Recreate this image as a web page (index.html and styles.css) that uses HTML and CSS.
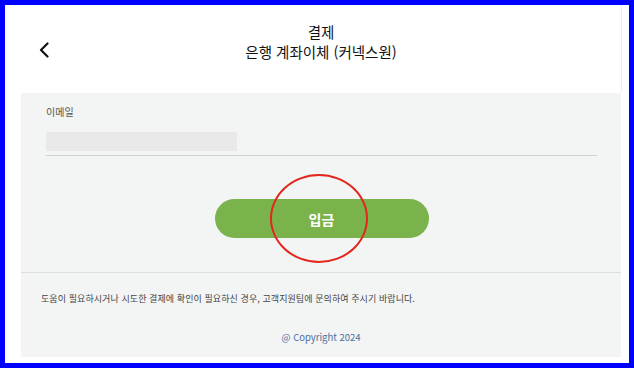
FILE: index.html
```html
<!DOCTYPE html>
<html lang="ko">
<head>
<meta charset="utf-8">
<title>결제</title>
<link rel="stylesheet" href="styles.css">
</head>
<body>
<div class="frame">
  <div class="card">
    <header class="header">
      <a class="back" href="#" aria-label="뒤로">
        <svg width="10" height="16" viewBox="0 0 10 16"><path d="M8.5 1.5 L2 8 L8.5 14.5" fill="none" stroke="#111" stroke-width="2.2" stroke-linecap="round" stroke-linejoin="round"/></svg>
      </a>
      <div class="title">
        <div>결제</div>
        <div>은행 계좌이체 (커넥스원)</div>
      </div>
      <div></div>
    </header>
    <main class="panel">
      <div class="form">
        <label class="label">이메일</label>
        <div class="field"><div class="input"></div></div>
        <div class="actions">
          <button class="btn">입금<span class="mark"></span></button>
        </div>
      </div>
      <footer class="footer">
        <p class="help">도움이 필요하시거나 시도한 결제에 확인이 필요하신 경우, 고객지원팀에 문의하여 주시기 바랍니다.</p>
        <p class="copy">@ Copyright 2024</p>
      </footer>
    </main>
  </div>
</div>
</body>
</html>
```

FILE: styles.css
```css
* { box-sizing: border-box; }
html, body { margin: 0; padding: 0; background: #fff; }
body { font-family: "Noto Sans CJK KR", "Noto Sans", sans-serif; }
.frame {
  width: 634px;
  height: 368px;
  border: 5px solid #0000ff;
  padding: 0 8px 6px 16px;
  background: #fff;
}
.card {
  display: flex;
  flex-direction: column;
  height: 100%;
}
.header {
  height: 88px;
  display: grid;
  grid-template-columns: 1fr auto 1fr;
  align-items: start;
  padding: 17px 18px 0;
  box-shadow: 1px 0 0 #eeeeee;
}
.back { display: block; width: 10px; height: 16px; margin-top: 20px; }
.back svg { display: block; }
.title {
  text-align: center;
  font-size: 14.5px;
  line-height: 20px;
  color: #111;
}
.panel {
  flex: 1;
  background: #f3f4f4;
  display: flex;
  flex-direction: column;
}
.form { padding: 12px 24px 0 25px; }
.label {
  display: block;
  font-size: 10px;
  line-height: 14px;
  color: #555;
}
.field {
  margin-top: 13px;
  padding-bottom: 4px;
  border-bottom: 1px solid #d2d2d2;
}
.input { width: 191px; height: 19px; background: #e9e9e9; }
.actions {
  display: flex;
  justify-content: center;
  margin-top: 43px;
  padding-bottom: 34px;
}
.btn {
  position: relative;
  width: 214px;
  height: 39px;
  border: 0;
  border-radius: 20px;
  background: #7ab34b;
  color: #fff;
  font-family: inherit;
  font-size: 14px;
  font-weight: 700;
}
.mark {
  position: absolute;
  left: 55px;
  top: -25px;
  width: 98px;
  height: 89px;
  border: 2px solid #e2261c;
  border-radius: 50%;
}
.footer {
  border-top: 1px solid #dedede;
  padding: 19px 20px 0;
}
.help {
  margin: 0;
  font-size: 9px;
  line-height: 14px;
  color: #444;
  letter-spacing: 0.08px;
}
.copy {
  margin: 24px 0 0;
  text-align: center;
  font-size: 9.5px;
  line-height: 14px;
  color: #4a6fa0;
}
```
